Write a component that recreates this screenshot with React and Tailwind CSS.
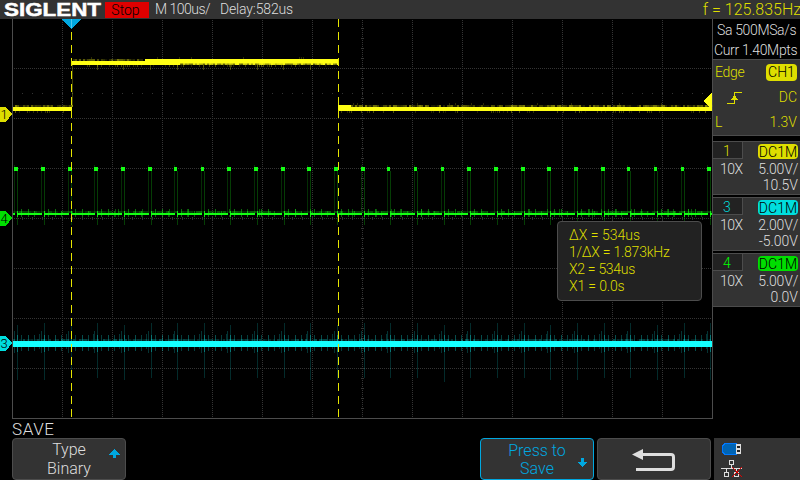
import React from 'react';

const noise = (n) => {
  const v = Math.sin(n * 127.1 + 31.7) * 43758.5453;
  return v - Math.floor(v);
};
const range = (n) => Array.from({ length: n }, (_, i) => i);
const pulses = range(27).map((i) => Math.round(14.2 + i * 26.66));

function Grid() {
  return (
    <g stroke="#343434" strokeWidth="1" fill="none">
      {range(13).map((i) => (
        <line key={'v' + i} x1={62.5 + i * 50} x2={62.5 + i * 50} y1="20" y2="417" strokeDasharray="1 1" />
      ))}
      {range(7).map((i) => (
        <line key={'h' + i} y1={68.5 + i * 50} y2={68.5 + i * 50} x1="14" x2="712" strokeDasharray="1 1" />
      ))}
      <line x1="362.5" x2="362.5" y1="28" y2="417" strokeWidth="3" strokeDasharray="1 9" />
      <line x1="22" x2="712" y1="218.5" y2="218.5" strokeWidth="3" strokeDasharray="1 9" />
      <line x1="22" x2="712" y1="93.5" y2="93.5" strokeDasharray="1 9" />
      <line x1="22" x2="712" y1="343.5" y2="343.5" strokeDasharray="1 9" />
    </g>
  );
}

function YellowTrace() {
  return (
    <g fill="#ffff14">
      {range(350).map((i) => {
        const x = 13 + i * 2;
        const high = x >= 72 && x < 338;
        const top = high ? (x < 145 ? 59 : 63) : 105;
        const r = noise(i);
        return (
          <g key={i}>
            <rect x={x} y={top} width="2" height="2" opacity={high && x >= 145 ? 0.35 + r * 0.65 : r * 0.5} />
            {noise(i + 900) > 0.65 && <rect x={x} y={high ? 65 : 111} width="1" height="2" opacity={0.1 + r * 0.25} />}
            {noise(i + 1500) > 0.93 && <rect x={x} y={high ? 57 : 103} width="1" height="2" opacity="0.18" />}
          </g>
        );
      })}
      {[97, 123, 150, 177, 203, 230, 257, 283, 310].map((x) => (
        <rect key={x} x={x} y="65" width="1" height="5" opacity="0.25" />
      ))}
      <rect x="72" y="65" width="1" height="42" opacity="0.25" />
      <rect x="13" y="107" width="59" height="4" />
      <rect x="72" y="61" width="73" height="4" />
      <rect x="145" y="59" width="194" height="4" />
      <rect x="145" y="63" width="194" height="1" opacity="0.5" />
      <rect x="145" y="63" width="35" height="2" />
      <rect x="337" y="59" width="2" height="6" />
      <rect x="338" y="105" width="13" height="2" />
      <rect x="338" y="107" width="374" height="4" />
    </g>
  );
}

function GreenTrace() {
  return (
    <g fill="#14ff14">
      {range(233).map((i) => (
        <g key={i}>
          <rect x={13 + i * 3} y="211" width="3" height="2" opacity={0.05 + noise(i + 50) * 0.35} />
          {noise(i + 77) > 0.87 && <rect x={13 + i * 3} y="209" width="1" height="8" opacity="0.35" />}
        </g>
      ))}
      <rect x="13" y="213" width="699" height="2" />
      {pulses.map((x) => (
        <g key={x}>
          <rect x={x + 1} y="213" width="2" height="2" fill="#000" />
          <rect x={x} y="165" width="1" height="48" opacity="0.18" />
          <rect x={x + 3} y="171" width="1" height="54" opacity="0.24" />
          <rect x={x + 3} y="211" width="1" height="6" opacity="0.8" />
          <rect x={x + 7} y="209" width="1" height="8" opacity="0.45" />
          <rect x={x + 14} y="209" width="1" height="8" opacity="0.45" />
          <rect x={x + 20} y="211" width="1" height="6" opacity="0.4" />
          <rect x={x} y="167" width={x % 3 ? 4 : 3} height="4" />
        </g>
      ))}
    </g>
  );
}

function CyanTrace() {
  return (
    <g fill="#14ffff">
      {range(349).map((i) => (
        <rect key={i} x={13 + i * 2} y="339" width="2" height="2" opacity={noise(i + 400) * 0.28} />
      ))}
      {pulses.map((x, i) => (
        <g key={x}>
          <rect x={x} y="331" width="1" height="22" opacity="0.2" />
          <rect x={x + 3} y={i % 4 === 0 ? 325 : 323} width="1" height={i % 5 === 1 ? 57 : 55} opacity="0.17" />
          <rect x={x + 3} y="335" width="1" height="17" opacity="0.35" />
          <rect x={x + 7} y="335" width="1" height="16" opacity="0.24" />
          <rect x={x + 14} y="335" width="1" height="16" opacity="0.3" />
          <rect x={x + 20} y="335" width="1" height="16" opacity="0.24" />
          <rect x={x + 25} y="334" width="1" height="15" opacity="0.2" />
        </g>
      ))}
      <rect x="13" y="341" width="699" height="6" />
    </g>
  );
}

function Marker({ y, color, label }) {
  return (
    <g>
      <path d={`M0 ${y - 7}H6L12 ${y}L6 ${y + 8}H0Z`} fill={color} />
      <text x="0.5" y={y + 5} fontSize="13" fill="#000" fontFamily="Roboto, sans-serif">{label}</text>
    </g>
  );
}

function Scope() {
  return (
    <svg className="block" width="713" height="400" viewBox="0 19 713 400" shapeRendering="crispEdges">
      <Grid />
      <path d="M12.5 19V418.5H712.5V19" fill="none" stroke="#4c4c4c" />
      <GreenTrace />
      <CyanTrace />
      <YellowTrace />
      <path d="M71.5 19V418M338.5 19V418" stroke="#e6e600" strokeDasharray="8 5" />
      <path d="M62 19H81L71.5 29Z" fill="#00a8e0" />
      <path d="M71.5 19V28" stroke="#50c8f0" />
      <path d="M712 93V109L703 101Z" fill="#ffff14" />
      <Marker y={114} color="#dede00" label="1" />
      <Marker y={218} color="#00de00" label="4" />
      <Marker y={343} color="#00dede" label="3" />
    </svg>
  );
}

function Channel({ n, text, badge, scale, offset }) {
  return (
    <div className="h-[54px] border-y border-[#4c4c4c] bg-[#333333] text-[#dedede]">
      <div className="flex h-[18px] justify-between">
        <span className={`h-[17px] w-[30px] border-r border-b border-[#4c4c4c] bg-[#222222] pr-px text-center leading-[19px] ${text}`}>{n}</span>
        <span className={`mt-[2px] mr-[2px] h-[15px] w-[40px] rounded-[4px] text-center leading-[16px] tracking-[0.1px] text-black ${badge}`}>DC1M</span>
      </div>
      <div className="flex h-[17px] items-end justify-between pr-[2px] pl-[7px] leading-[15px]">
        <span className="tracking-[-0.5px]">10X</span>
        <span className="tracking-[-0.2px]">{scale}</span>
      </div>
      <div className="pr-[2px] text-right leading-[17px]">{offset}</div>
    </div>
  );
}

function Sidebar() {
  return (
    <aside className="flex w-[87px] flex-col text-[14px]">
      <div className="h-[41px] border-b border-[#4c4c4c] pt-px pr-[4px] leading-[20px] whitespace-nowrap text-[#dedede]">
        <div className="pl-[4px] tracking-[-0.35px]">Sa 500MSa/s</div>
        <div className="pl-px tracking-[-0.35px]">Curr 1.40Mpts</div>
      </div>
      <div className="flex h-[76px] flex-col border-b border-[#4c4c4c] bg-[#333333] pr-[3px] pl-[2px] text-[#dede00]">
        <div className="flex h-[25px] items-center justify-between">
          <span className="tracking-[-0.3px]">Edge</span>
          <span className="h-[17px] w-[31px] rounded-[4px] bg-[#dede00] text-center leading-[17px] text-black">CH1</span>
        </div>
        <div className="flex h-[25px] items-center justify-between pl-[12px]">
          <svg width="16" height="14" viewBox="0 0 16 14" fill="none" stroke="#dede00" shapeRendering="crispEdges">
            <path d="M0 12.5H7.5V1.5H15" />
            <path d="M7.5 4L11 9H4Z" fill="#dede00" stroke="none" />
          </svg>
          <span>DC</span>
        </div>
        <div className="flex h-[25px] items-center justify-between">
          <span>L</span>
          <span>1.3V</span>
        </div>
      </div>
      <div className="mt-[5px] flex flex-col gap-[2px]">
        <Channel n="1" text="text-[#dede00]" badge="bg-[#dede00]" scale="5.00V/" offset="10.5V" />
        <Channel n="3" text="text-[#00dede]" badge="bg-[#00dede]" scale="2.00V/" offset="-5.00V" />
        <Channel n="4" text="text-[#00ff00]" badge="bg-[#00de00]" scale="5.00V/" offset="0.0V" />
      </div>
    </aside>
  );
}

export default function App() {
  return (
    <div className="flex h-[480px] w-[800px] flex-col overflow-hidden bg-black font-['Roboto',sans-serif] font-light">
      <header className="flex h-[19px] items-center bg-[#333333] text-[14px] leading-[19px] whitespace-nowrap text-[#dedede]">
        <svg className="ml-[4px]" width="98" height="19" viewBox="0 0 98 19">
          <text x="0" y="16" fontFamily="Liberation Sans, sans-serif" fontWeight="bold" fontSize="19" fill="#fff" stroke="#fff" strokeWidth="0.5" textLength="97" lengthAdjust="spacingAndGlyphs">SIGLENT</text>
        </svg>
        <span className="ml-[3px] h-[16px] w-[44px] bg-[#de0000] pr-[3px] text-center leading-[17px] text-black">Stop</span>
        <span className="ml-[6px] w-[65px] tracking-[-0.5px]">M 100us/</span>
        <span className="tracking-[-0.15px]">Delay:582us</span>
        <span className="mr-[-1px] ml-auto text-[16px] text-[#dede00]">f = 125.835Hz</span>
      </header>
      <main className="flex h-[400px]">
        <div className="relative w-[713px]">
          <Scope />
          <div className="absolute top-[202px] left-[557px] h-[80px] w-[145px] rounded-[4px] border border-[#4c4c4c] bg-[#222222] pt-[5px] pl-[11px] text-[14px] leading-[17px] text-[#dede00]">
            <div>ΔX = 534us</div>
            <div className="tracking-[-0.25px]">1/ΔX = 1.873kHz</div>
            <div className="tracking-[-0.3px]">X2 = 534us</div>
            <div className="tracking-[-0.15px]">X1 = 0.0s</div>
          </div>
        </div>
        <Sidebar />
      </main>
      <footer className="flex h-[61px] flex-col text-[16px] text-[#dedede]">
        <div className="h-[19px] pl-[12px] text-[17px] leading-[21px] tracking-[0.6px]">SAVE</div>
        <div className="flex h-[42px] pl-[12px]">
          <div className="flex w-[114px] items-center rounded-[4px] border border-[#4c4c4c] bg-[#333333]">
            <div className="w-[112px] text-center leading-[19px]">Type<br />Binary</div>
            <svg className="mt-[-10px] ml-[-16px] shrink-0" width="12" height="10" viewBox="0 0 12 10" fill="#00a8e0" shapeRendering="crispEdges">
              <path d="M5.5 0L11 6H7V9H4V6H0Z" />
            </svg>
          </div>
          <div className="ml-[354px] flex w-[114px] items-center rounded-[4px] border border-[#00a8e0] bg-[#333333] text-[#00a8e0]">
            <div className="w-[112px] pt-px text-center leading-[18px]">Press to<br />Save</div>
            <svg className="mt-[8px] ml-[-16px] shrink-0" width="12" height="10" viewBox="0 0 12 10" fill="#00a8e0" shapeRendering="crispEdges">
              <path d="M5.5 9L11 4H7V0H4V4H0Z" />
            </svg>
          </div>
          <div className="ml-[3px] flex w-[114px] items-center justify-center rounded-[4px] border border-[#4c4c4c] bg-[#333333]">
            <svg className="mt-[2px]" width="44" height="24" viewBox="0 0 44 24">
              <path d="M10 6.500H39Q41.5 6.500 41.5 9V19Q41.5 21.5 39 21.5H4" fill="none" stroke="#dedede" strokeWidth="3" />
              <path d="M0 6.500L11 1V12Z" fill="#dedede" />
            </svg>
          </div>
          <div className="ml-[3px] w-[86px] bg-[#333333]">
            <svg width="40" height="42" viewBox="714 438 40 42" shapeRendering="crispEdges">
              <path d="M736 443.5H725L722.5 446V452L725 454.5H736Z" fill="#0064b4" stroke="#0078ff" />
              <rect x="736" y="444" width="5" height="10" fill="#dedede" />
              <rect x="737" y="446" width="3" height="2" fill="#222" />
              <rect x="737" y="450" width="3" height="2" fill="#222" />
              <path d="M729.5 460.5H733.5V464.5H729.5ZM731.5 465V468.5M721 468.5H742M726.5 469V472M736.5 469V472M724.5 472.5H728.5V476.5H724.5ZM734.5 472.5H738.5V476.5H734.5Z" fill="none" stroke="#dedede" />
              <path d="M732 467L742 477M742 467L732 477" stroke="#de0000" />
            </svg>
          </div>
        </div>
      </footer>
    </div>
  );
}
